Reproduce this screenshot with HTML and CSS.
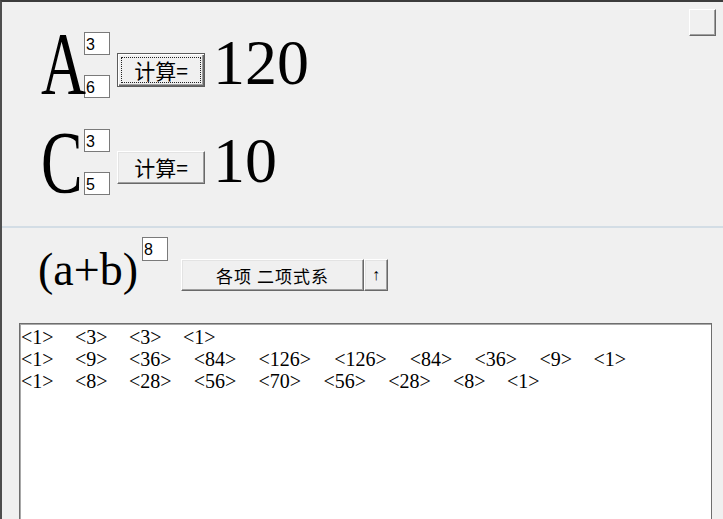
FILE: index.html
```html
<!DOCTYPE html>
<html lang="zh-CN">
<head>
<meta charset="utf-8">
<title>排列组合</title>
<link rel="stylesheet" href="styles.css">
</head>
<body>
<div class="window">
  <div class="top">
    <div class="calc">
      <div class="row row-a">
        <span class="big">A</span>
        <div class="args">
          <input class="num" type="text" value="3">
          <input class="num" type="text" value="6">
        </div>
        <button class="btn calc-btn btn-default"><span class="focus">计算=</span></button>
        <span class="result">120</span>
      </div>
      <div class="row row-c">
        <span class="big">C</span>
        <div class="args">
          <input class="num" type="text" value="3">
          <input class="num" type="text" value="5">
        </div>
        <button class="btn calc-btn">计算=</button>
        <span class="result">10</span>
      </div>
    </div>
    <div class="corner-btn"></div>
  </div>
  <div class="divider"></div>
  <div class="bottom">
    <div class="binom">
      <span class="expr">(a+b)</span>
      <input class="num exp" type="text" value="8">
      <div class="btn-group">
        <button class="btn wide">各项 二项式系</button>
        <button class="btn arrow">↑</button>
      </div>
    </div>
    <div class="output">
      <div class="line"><span class="c1">&lt;1&gt;</span><span class="c1">&lt;3&gt;</span><span class="c1">&lt;3&gt;</span><span class="c1">&lt;1&gt;</span></div>
      <div class="line"><span class="c1">&lt;1&gt;</span><span class="c1">&lt;9&gt;</span><span class="c2">&lt;36&gt;</span><span class="c2">&lt;84&gt;</span><span class="c3">&lt;126&gt;</span><span class="c3">&lt;126&gt;</span><span class="c2">&lt;84&gt;</span><span class="c2">&lt;36&gt;</span><span class="c1">&lt;9&gt;</span><span class="c1">&lt;1&gt;</span></div>
      <div class="line"><span class="c1">&lt;1&gt;</span><span class="c1">&lt;8&gt;</span><span class="c2">&lt;28&gt;</span><span class="c2">&lt;56&gt;</span><span class="c2">&lt;70&gt;</span><span class="c2">&lt;56&gt;</span><span class="c2">&lt;28&gt;</span><span class="c1">&lt;8&gt;</span><span class="c1">&lt;1&gt;</span></div>
    </div>
  </div>
</div>
</body>
</html>
```

FILE: styles.css
```css
* { box-sizing: border-box; }
html, body { margin: 0; padding: 0; }
body {
  background: #f0f0f0;
  overflow: hidden;
  font-family: "Liberation Sans", Arial, sans-serif;
  color: #000;
}
.window {
  width: 723px;
  height: 519px;
  border-top: 2px solid #3c3c3c;
  border-left: 2px solid #4e4e4e;
  background: #f0f0f0;
  overflow: hidden;
  display: flex;
  flex-direction: column;
}
.top {
  flex: none;
  height: 224px;
  display: flex;
  justify-content: space-between;
}
.calc { padding: 16px 0 0 39px; }
.row {
  display: flex;
  align-items: flex-start;
  height: 99px;
}
.big {
  display: block;
  width: 43px;
  font-family: "Liberation Serif", "Times New Roman", serif;
  font-size: 89px;
  line-height: 90px;
  white-space: nowrap;
  transform: scaleX(0.7);
  transform-origin: 0 0;
}
.args {
  display: flex;
  flex-direction: column;
  gap: 20px;
}
.row-a .args { margin-top: 14px; }
.row-c .args { margin-top: 12px; }
.num {
  display: block;
  width: 26px;
  height: 23px;
  margin: 0;
  padding: 2px 0 0 1px;
  border: 1px solid #7a7a7a;
  background: #fff;
  color: #000;
  font: 16px "Liberation Sans", Arial, sans-serif;
  outline: none;
}
.btn {
  display: flex;
  align-items: center;
  justify-content: center;
  margin: 0;
  padding: 0;
  background: #f0f0f0;
  color: #000;
  border: 1px solid;
  border-color: #ffffff #696969 #696969 #ffffff;
  box-shadow: inset -1px -1px 0 #a0a0a0, inset 1px 1px 0 #e3e3e3;
  font-family: "Noto Sans CJK SC", "Liberation Sans", sans-serif;
  line-height: 1;
}
.calc-btn {
  width: 88px;
  height: 33px;
  margin: 34px 0 0 7px;
  font-size: 21px;
}
.btn-default {
  height: 34px;
  margin-top: 35px;
  padding: 3px;
  border-color: #5c5c5c;
  box-shadow: inset 1px 1px 0 #ffffff, inset -1px -1px 0 #696969, inset -2px -2px 0 #a0a0a0;
}
.focus {
  display: flex;
  align-items: center;
  justify-content: center;
  width: 100%;
  height: 100%;
  border: 1px dotted #222;
}
.result {
  display: block;
  font-family: "Liberation Serif", "Times New Roman", serif;
  font-size: 64px;
  line-height: 64px;
  margin: 13px 0 0 8px;
}
.row-c .result { margin-top: 12px; }
.corner-btn {
  width: 27px;
  height: 27px;
  margin: 7px 7px 0 0;
  background: #f0f0f0;
  border: 1px solid;
  border-color: #ffffff #696969 #696969 #ffffff;
  box-shadow: inset -1px -1px 0 #a0a0a0;
}
.divider {
  flex: none;
  height: 2px;
  background: #d3dde5;
}
.bottom { flex: 1; }
.binom {
  display: flex;
  align-items: flex-start;
  height: 95px;
  padding: 9px 0 0 36px;
}
.expr {
  display: block;
  font-family: "Liberation Serif", "Times New Roman", serif;
  font-size: 46px;
  line-height: 46px;
  margin-top: 10px;
}
.exp {
  height: 24px;
  margin-left: 4px;
}
.btn-group {
  display: flex;
  margin: 22px 0 0 13px;
}
.wide {
  width: 183px;
  height: 32px;
  font-size: 17px;
  letter-spacing: 1px;
}
.arrow {
  width: 24px;
  height: 32px;
  font-size: 16px;
  font-family: "Liberation Sans", Arial, sans-serif;
}
.output {
  margin-left: 17px;
  width: 693px;
  height: 260px;
  background: #fff;
  border: 1px solid #6e6e6e;
  box-shadow: inset 1px 1px 0 #a8a8a8;
  padding: 2px 0 0 1px;
  font-family: "Liberation Serif", "Times New Roman", serif;
  font-size: 20px;
  line-height: 22px;
}
.line {
  display: flex;
  height: 22px;
  white-space: nowrap;
}
.line span { flex: none; }
.c1 { width: 54px; }
.c2 { width: 64.8px; }
.c3 { width: 75.6px; }
```
